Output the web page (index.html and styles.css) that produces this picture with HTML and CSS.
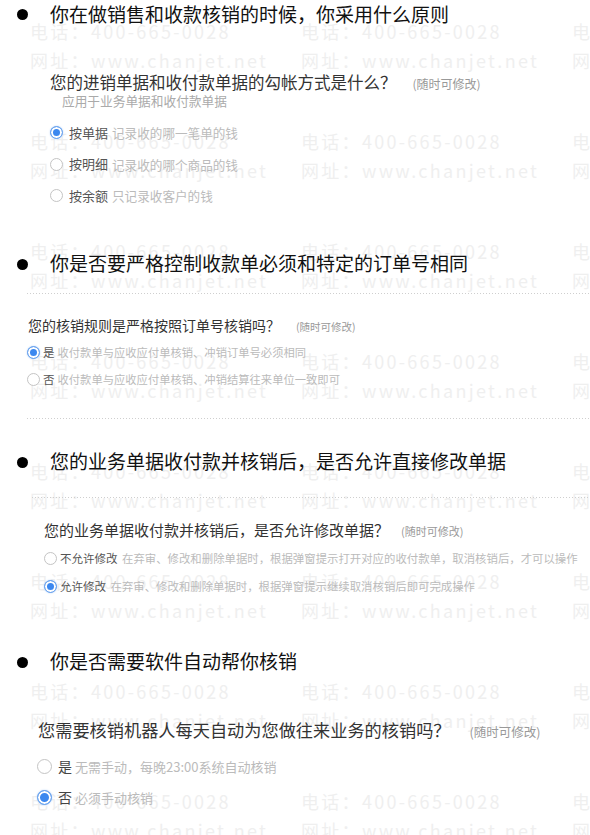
FILE: index.html
```html
<!DOCTYPE html>
<html lang="zh-CN">
<head>
    <meta charset="UTF-8">
    <meta name="viewport" content="width=device-width, initial-scale=1.0">
    <title>核销设置</title>
    <link rel="stylesheet" href="styles.css">
</head>
<body>
<div class="page">
    <div class="watermark" id="watermark"></div>

    <section class="block s1">
        <h2 class="topic"><span class="dot"></span>你在做销售和收款核销的时候，你采用什么原则</h2>
        <p class="ask">您的进销单据和收付款单据的勾帐方式是什么？<span class="note">(随时可修改)</span></p>
        <p class="hint">应用于业务单据和收付款单据</p>
        <ul class="options">
            <li><span class="radio on"></span><span class="label">按单据</span><span class="desc">记录收的哪一笔单的钱</span></li>
            <li><span class="radio"></span><span class="label">按明细</span><span class="desc">记录收的哪个商品的钱</span></li>
            <li><span class="radio"></span><span class="label">按余额</span><span class="desc">只记录收客户的钱</span></li>
        </ul>
    </section>

    <section class="block s2">
        <h2 class="topic"><span class="dot"></span>你是否要严格控制收款单必须和特定的订单号相同</h2>
        <div class="line"></div>
        <p class="ask">您的核销规则是严格按照订单号核销吗？<span class="note">(随时可修改)</span></p>
        <ul class="options">
            <li><span class="radio on"></span><span class="label">是</span><span class="desc">收付款单与应收应付单核销、冲销订单号必须相同</span></li>
            <li><span class="radio"></span><span class="label">否</span><span class="desc">收付款单与应收应付单核销、冲销结算往来单位一致即可</span></li>
        </ul>
        <div class="line"></div>
    </section>

    <section class="block s3">
        <h2 class="topic"><span class="dot"></span>您的业务单据收付款并核销后，是否允许直接修改单据</h2>
        <div class="line"></div>
        <p class="ask">您的业务单据收付款并核销后，是否允许修改单据？<span class="note">(随时可修改)</span></p>
        <ul class="options">
            <li><span class="radio"></span><span class="label">不允许修改</span><span class="desc">在弃审、修改和删除单据时，根据弹窗提示打开对应的收付款单，取消核销后，才可以操作</span></li>
            <li><span class="radio on"></span><span class="label">允许修改</span><span class="desc">在弃审、修改和删除单据时，根据弹窗提示继续取消核销后即可完成操作</span></li>
        </ul>
    </section>

    <section class="block s4">
        <h2 class="topic"><span class="dot"></span>你是否需要软件自动帮你核销</h2>
        <p class="ask">您需要核销机器人每天自动为您做往来业务的核销吗？<span class="note">(随时可修改)</span></p>
        <ul class="options">
            <li><span class="radio"></span><span class="label">是</span><span class="desc">无需手动，每晚23:00系统自动核销</span></li>
            <li><span class="radio on"></span><span class="label">否</span><span class="desc">必须手动核销</span></li>
        </ul>
    </section>
</div>

<script>
    // Tile the phone / site watermark over the whole page
    const watermark = document.getElementById('watermark');
    for (let i = 0; i < 24; i++) {
        const cell = document.createElement('div');
        cell.innerHTML = '<div>电话：400-665-0028</div><div>网址：www.chanjet.net</div>';
        watermark.appendChild(cell);
    }
</script>
</body>
</html>
```

FILE: styles.css
```css
body {
    margin: 0;
    font-family: "Noto Sans CJK SC", "Microsoft YaHei", sans-serif;
    color: #333;
    background: #fff;
}
.page {
    position: relative;
    min-height: 835px;
    overflow: hidden;
}
.watermark {
    position: absolute;
    top: 0;
    left: 0;
    right: 0;
    bottom: 0;
    z-index: 0;
    display: grid;
    grid-template-columns: repeat(3, 271px);
    grid-auto-rows: 110px;
    padding: 17px 0 0 30px;
    color: #efefef;
    font-size: 18px;
    line-height: 29px;
    letter-spacing: 2.3px;
    white-space: nowrap;
    pointer-events: none;
}
.block {
    position: relative;
    z-index: 1;
}
.topic {
    display: flex;
    align-items: center;
    box-sizing: border-box;
    height: 30px;
    padding-bottom: 3px;
    margin: 0;
    font-size: 19px;
    line-height: 24px;
    font-weight: normal;
    color: #111;
    white-space: nowrap;
}
.dot {
    flex: none;
    width: 11px;
    height: 11px;
    border-radius: 50%;
    background: #000;
    margin: 2px 22px 0 17px;
}
.line {
    height: 1px;
    background: repeating-linear-gradient(to right, #cfcfcf 0 1px, transparent 1px 3px);
}
.ask {
    margin: 0;
    color: #333;
    white-space: nowrap;
}
.note {
    color: #999;
    line-height: 1;
}
.hint {
    margin: 0;
    color: #aaa;
}
.options {
    list-style: none;
    margin: 0;
    padding: 0;
}
.options li {
    display: flex;
    align-items: center;
    white-space: nowrap;
    line-height: 1.2;
}
.radio {
    flex: none;
    box-sizing: border-box;
    border-radius: 50%;
    border: 1px solid #c4c4c4;
    background: #fff;
}
.radio.on {
    border-color: #6fa6ee;
    background: #3c88ef;
    box-shadow: inset 0 0 0 2px #fff, 0 0 2px #b9d4f7;
}
.label {
    color: #555;
}
.desc {
    color: #bbb;
}

/* section 1 */
.s1 .ask { margin: 41px 0 0 50px; font-size: 16.5px; line-height: 22px; }
.s1 .note { font-size: 12px; margin-left: 16px; }
.s1 .hint { margin-left: 62px; font-size: 12.7px; line-height: 16px; }
.s1 .options { margin: 8px 0 0 50px; }
.s1 .options li { height: 31.5px; }
.s1 .radio { width: 13px; height: 13px; margin-right: 6px; }
.s1 .label { font-size: 13px; margin-right: 4px; }
.s1 .desc { font-size: 12.6px; }

/* section 2 */
.s2 { margin-top: 38px; }
.s2 .line { margin: 13px 0 0 27px; }
.s2 .line:last-child { margin-top: 24.5px; }
.s2 .ask { margin: 21px 0 0 28px; font-size: 14px; line-height: 20px; }
.s2 .note { font-size: 10.5px; margin-left: 16px; }
.s2 .options { margin: 4.5px 0 0 27px; }
.s2 .options li { height: 27px; }
.s2 .radio { width: 13px; height: 13px; margin-right: 3px; }
.s2 .label { font-size: 11.5px; margin-right: 3px; }
.s2 .desc { font-size: 11.3px; }

/* section 3 */
.s3 { margin-top: 29px; }
.s3 .line { margin: 19px 0 0 32px; }
.s3 .ask { margin: 21px 0 0 44px; font-size: 15px; line-height: 22px; }
.s3 .note { font-size: 11px; margin-left: 12px; }
.s3 .options { margin: 4px 0 0 44px; }
.s3 .options li { height: 28px; }
.s3 .radio { width: 13px; height: 13px; margin-right: 3px; }
.s3 .label { font-size: 11.5px; margin-right: 4.5px; }
.s3 .desc { font-size: 11.4px; }

/* section 4 */
.s4 { margin-top: 47px; }
.s4 .ask { margin: 39px 0 0 38px; font-size: 17.2px; line-height: 26px; }
.s4 .note { font-size: 12.5px; margin-left: 19px; }
.s4 .options { margin: 8.5px 0 0 37px; }
.s4 .options li { height: 31px; }
.s4 .radio { width: 15px; height: 15px; margin-right: 6px; }
.s4 .label { font-size: 14px; margin-right: 3px; color: #444; }
.s4 .desc { font-size: 13px; }
```
